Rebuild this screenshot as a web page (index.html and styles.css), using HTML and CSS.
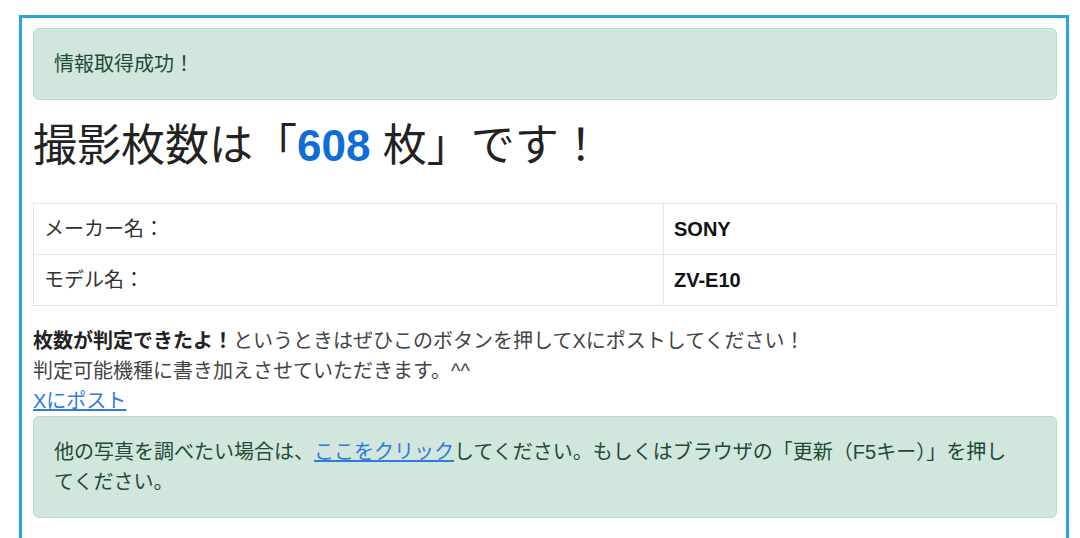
FILE: index.html
```html
<!DOCTYPE html>
<html lang="ja">
<head>
<meta charset="utf-8">
<title>撮影枚数</title>
<link rel="stylesheet" href="styles.css">
</head>
<body>
<div class="frame">
  <div class="alert">情報取得成功！</div>
  <h1 class="title">撮影枚数は「<span class="count">608</span> 枚」です！</h1>
  <table class="info">
    <tr><td class="label">メーカー名：</td><td class="value">SONY</td></tr>
    <tr><td class="label">モデル名：</td><td class="value">ZV-E10</td></tr>
  </table>
  <p class="note"><strong>枚数が判定できたよ！</strong>というときはぜひこのボタンを押してXにポストしてください！<br>判定可能機種に書き加えさせていただきます。^^<br><a href="#" class="link">Xにポスト</a></p>
  <div class="alert alert-wide">他の写真を調べたい場合は、<a href="#" class="link">ここをクリック</a>してください。もしくはブラウザの「更新（F5キー）」を押してください。</div>
</div>
</body>
</html>
```
FILE: styles.css
```css
html, body {
  margin: 0;
  padding: 0;
  background: #ffffff;
}
body {
  padding: 15px 11px 0 19px;
  font-family: "Liberation Sans", "Noto Sans CJK JP", sans-serif;
  font-size: 20px;
  line-height: 30px;
  color: #333333;
}
.frame {
  width: 1024px;
  border: 3px solid #2aa5d9;
  border-bottom: none;
  padding: 10px 9px 20px 11px;
}
.alert {
  background: #d1e7dd;
  border: 1px solid #badbcc;
  border-radius: 6px;
  color: #1f4a36;
  padding: 20px 20px;
  margin: 0 0 20px 0;
}
.alert-wide {
  padding-right: 40px;
}
.title {
  margin: 0 0 31px 0;
  font-size: 44px;
  line-height: 52px;
  font-weight: 400;
  color: #222222;
}
.count {
  color: #0f6dd8;
  font-weight: 700;
}
.info {
  width: 100%;
  border-collapse: collapse;
  margin: 0 0 20px 0;
}
.info td {
  border: 1px solid #e3e5e8;
  padding: 10px 10px;
}
.label {
  width: 609px;
  color: #333333;
}
.value {
  font-weight: 700;
  color: #111111;
}
.note {
  margin: 0;
  color: #444444;
}
.note strong {
  color: #222222;
}
.link {
  color: #2f7ae0;
  text-decoration: underline;
}
```
